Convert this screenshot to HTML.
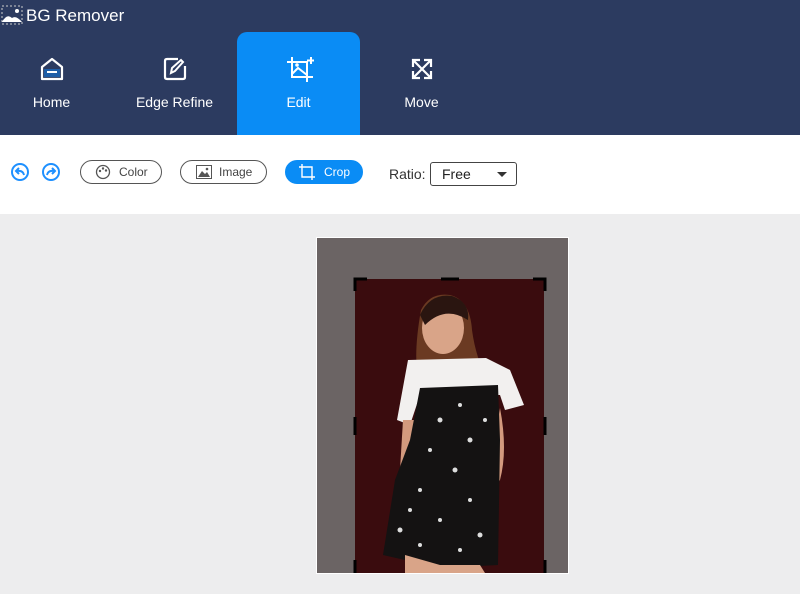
<!DOCTYPE html>
<html><head><style>
body{margin:0;width:800px;height:594px;overflow:hidden;background:#ededee;font-family:"Liberation Sans",sans-serif;position:relative}
.top{position:absolute;left:0;top:0;width:800px;height:135px;background:#2c3b60}
.title{position:absolute;left:26px;top:6px;color:#fff;font-size:17px}
.tab{position:absolute;top:32px;width:123px;height:103px;color:#fff;font-size:14px;text-align:center}
.tab .lbl{position:absolute;top:62px;width:100%}
.tab svg{position:absolute;left:50%;top:24px;margin-left:-13px}
.bar{position:absolute;left:0;top:135px;width:800px;height:79px;background:#fff}
.btn{position:absolute;top:160px;height:24px;border:1px solid #555;border-radius:13px;box-sizing:border-box;font-size:12px;color:#444;line-height:22px}
.circ{position:absolute;top:163px;width:18px;height:18px;border-radius:50%;border:2px solid #1e90ff;box-sizing:border-box}
</style></head><body>
<div class="top"></div>
<svg style="position:absolute;left:1px;top:5px" width="22" height="20" viewBox="0 0 22 20"><rect x="1" y="1" width="20" height="18" fill="none" stroke="#ccc" stroke-dasharray="2 2"/><path d="M1 17 Q6 8 11 13 Q15 10 21 17Z" fill="#fff"/><circle cx="16" cy="6" r="2" fill="#fff"/></svg>
<div class="title">BG Remover</div>
<div class="tab" style="left:-10px"><svg width="26" height="26" viewBox="0 0 26 26"><path d="M3 11 L13 3 L23 11 V23 H3Z" fill="none" stroke="#fff" stroke-width="2.2" stroke-linejoin="round"/><rect x="5" y="13" width="16" height="8" fill="#1f5fa8"/><path d="M8 16 H18" stroke="#fff" stroke-width="2"/></svg><div class="lbl">Home</div></div>
<div class="tab" style="left:113px"><svg width="26" height="26" viewBox="0 0 26 26"><path d="M16 3 H5 Q3 3 3 5 V21 Q3 23 5 23 H21 Q23 23 23 21 V10" fill="none" stroke="#fff" stroke-width="2.2"/><path d="M9 17 L10 12 L19 4 L21 6 L13 15Z" fill="none" stroke="#fff" stroke-width="2"/></svg><div class="lbl">Edge Refine</div></div>
<div class="tab" style="left:237px;background:#0a8cf5;border-radius:10px 10px 0 0"><svg width="28" height="28" viewBox="0 0 28 28"><path d="M6 1 V21 H27 M1 6 H21 V26" fill="none" stroke="#fff" stroke-width="2"/><path d="M25 1 V8 M21 4.5 H28" stroke="#fff" stroke-width="2"/><path d="M6 18 L12 12 L21 19" fill="none" stroke="#fff" stroke-width="2"/><circle cx="11" cy="9" r="1.8" fill="#fff"/></svg><div class="lbl">Edit</div></div>
<div class="tab" style="left:360px"><svg width="26" height="26" viewBox="0 0 26 26" fill="none" stroke="#fff" stroke-width="2.2"><path d="M4 4 L22 22 M22 4 L4 22 M4 11 V4 H11 M15 4 H22 V11 M22 15 V22 H15 M11 22 H4 V15"/></svg><div class="lbl">Move</div></div>
<div class="bar"></div>
<div class="circ" style="left:11px"></div><div class="circ" style="left:42px"></div>
<svg style="position:absolute;left:11px;top:163px" width="50" height="18"><path d="M13 12 Q12 7 6 8 M8 5 L5 8 L8 11" fill="none" stroke="#1e90ff" stroke-width="2"/><path d="M36 12 Q37 7 43 8 M41 5 L44 8 L41 11" fill="none" stroke="#1e90ff" stroke-width="2"/></svg>
<div class="btn" style="left:80px;width:82px;padding-left:38px">Color</div>
<svg style="position:absolute;left:95px;top:164px" width="16" height="16"><circle cx="8" cy="8" r="6.5" fill="none" stroke="#555" stroke-width="1.3"/><circle cx="5" cy="7" r="1.2" fill="#555"/><circle cx="8" cy="4.5" r="1.2" fill="#555"/><circle cx="11" cy="6.5" r="1.2" fill="#555"/></svg>
<div class="btn" style="left:180px;width:87px;padding-left:38px">Image</div>
<svg style="position:absolute;left:196px;top:165px" width="16" height="14"><rect x="0.5" y="0.5" width="15" height="13" fill="none" stroke="#555"/><path d="M2 12 L6 6 L9 9 L11 7 L14 12Z" fill="#555"/><circle cx="11" cy="4" r="1.3" fill="#555"/></svg>
<div class="btn" style="left:285px;width:78px;padding-left:38px;background:#0a8cf5;border-color:#0a8cf5;color:#fff">Crop</div>
<svg style="position:absolute;left:299px;top:164px" width="16" height="16" fill="none" stroke="#fff" stroke-width="1.4"><path d="M3 0 V13 H16 M0 3 H13 V16"/></svg>
<div style="position:absolute;left:389px;top:166px;font-size:14px;color:#333">Ratio:</div>
<div style="position:absolute;left:430px;top:162px;width:87px;height:24px;border:1px solid #444;border-radius:3px;box-sizing:border-box;font-size:14px;line-height:22px;padding-left:11px;color:#222">Free</div>
<div style="position:absolute;left:497px;top:172px;border:5px solid transparent;border-top:5px solid #333;border-bottom:0"></div>
<div style="position:absolute;left:316px;top:237px;width:253px;height:337px;background:#fff"></div>
<div style="position:absolute;left:317px;top:238px;width:251px;height:335px;background:#6b6464"></div>
<div style="position:absolute;left:355px;top:279px;width:189px;height:294px;background:#3a0c0e"></div>
<svg style="position:absolute;left:355px;top:279px" width="189" height="294" viewBox="355 279 189 294">
<path d="M421 310 Q430 292 450 295 Q470 300 472 330 Q476 360 490 385 L420 385 Q412 360 421 310Z" fill="#6b3a22"/>
<ellipse cx="443" cy="328" rx="21" ry="26" fill="#d9a488"/>
<path d="M420 315 Q430 293 452 296 Q470 302 468 320 Q445 305 425 325Z" fill="#2a1510"/>
<path d="M408 360 L486 358 L510 370 L524 405 L505 410 L500 395 L420 395 L410 425 L397 420Z" fill="#f2f0ef"/>
<path d="M500 408 Q508 450 500 480 L470 520 L460 510 L490 470 Z" fill="#d39a7e"/>
<path d="M403 420 L415 420 L410 470 L400 470Z" fill="#d39a7e"/>
<path d="M420 388 L498 385 L500 440 L498 565 L440 568 L383 555 L395 480 L410 440Z" fill="#141212"/>
<path d="M405 555 L440 565 L480 565 L485 573 L405 573Z" fill="#d9a488"/>
<g fill="#ddd"><circle cx="440" cy="420" r="2.5"/><circle cx="460" cy="405" r="2"/><circle cx="470" cy="440" r="2.5"/><circle cx="430" cy="450" r="2"/><circle cx="455" cy="470" r="2.5"/><circle cx="420" cy="490" r="2"/><circle cx="470" cy="500" r="2"/><circle cx="400" cy="530" r="2.5"/><circle cx="440" cy="520" r="2"/><circle cx="480" cy="535" r="2.5"/><circle cx="420" cy="545" r="2"/><circle cx="460" cy="550" r="2"/><circle cx="485" cy="420" r="2"/><circle cx="410" cy="510" r="2"/></g>
</svg>
<svg style="position:absolute;left:353px;top:277px" width="194" height="297" fill="none" stroke="#000" stroke-width="3"><path d="M2 14 V2 H14 M180 2 H192 V14 M2 283 V296 M192 283 V296 M88 2 H106 M2 140 V158 M192 140 V158"/></svg>
</body></html>
